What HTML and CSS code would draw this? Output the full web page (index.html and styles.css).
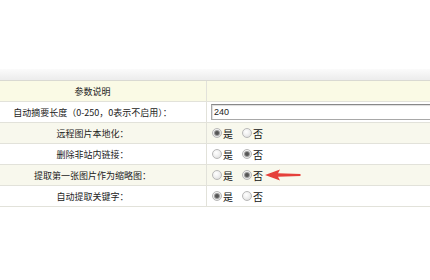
FILE: index.html
```html
<!DOCTYPE html>
<html lang="zh-CN">
<head>
<meta charset="utf-8">
<title>参数说明</title>
<link rel="stylesheet" href="styles.css">
</head>
<body>
<div class="spacer"></div>
<div class="toolbar"></div>
<div class="grid">
  <div class="cell label head">参数说明</div>
  <div class="cell value head"></div>

  <div class="cell label">自动摘要长度（0-250，0表示不启用）：</div>
  <div class="cell value"><input class="text" type="text" value="240"></div>

  <div class="cell label alt">远程图片本地化：</div>
  <div class="cell value alt">
    <span class="radio on"></span><span class="opt">是</span>
    <span class="radio"></span><span class="opt">否</span>
  </div>

  <div class="cell label">删除非站内链接：</div>
  <div class="cell value">
    <span class="radio"></span><span class="opt">是</span>
    <span class="radio on"></span><span class="opt">否</span>
  </div>

  <div class="cell label alt">提取第一张图片作为缩略图：</div>
  <div class="cell value alt">
    <span class="radio"></span><span class="opt">是</span>
    <span class="radio on"></span><span class="opt">否</span>
    <svg class="arrow" width="36" height="12" viewBox="0 0 36 12"><path d="M0 6 L15 0.4 L13 4.2 L35.5 5 L35.5 7 L13 7.8 L15 11.6 Z" fill="#e5403b"/></svg>
  </div>

  <div class="cell label">自动提取关键字：</div>
  <div class="cell value">
    <span class="radio on"></span><span class="opt">是</span>
    <span class="radio"></span><span class="opt">否</span>
  </div>
</div>
</body>
</html>
```

FILE: styles.css
```css
html, body {
  margin: 0;
  padding: 0;
  overflow: hidden;
  background: #fff;
}
body {
  width: 430px;
  height: 280px;
  font-family: "Noto Sans CJK SC", "Liberation Sans", sans-serif;
  font-size: 9px;
  color: #222;
}
.spacer {
  height: 69px;
}
.toolbar {
  height: 11px;
  background: linear-gradient(#fbfbfb, #ececec);
  border-bottom: 1px solid #d9d9d2;
}
.grid {
  display: grid;
  grid-template-columns: 207px 1fr;
}
.cell {
  height: 20px;
  border-bottom: 1px solid #e2e2da;
  display: flex;
  align-items: center;
  background: #fff;
}
.cell.head {
  background: #fafae5;
}
.cell.alt {
  background: #f8f8ed;
}
.label {
  justify-content: center;
  padding-right: 21px;
  border-right: 1px solid #e2e2da;
}
.value {
  padding-left: 5px;
  min-width: 0;
  overflow: hidden;
}
.text {
  flex: none;
  box-sizing: border-box;
  width: 240px;
  height: 16px;
  margin: 0 0 0 -1px;
  padding: 0 2px;
  border: 1px solid #a8a8a8;
  border-top-color: #888;
  box-shadow: inset 1px 1px 1px #ddd;
  font-family: "Liberation Sans", sans-serif;
  font-size: 9px;
  color: #222;
  outline: none;
}
.radio {
  box-sizing: border-box;
  width: 10px;
  height: 10px;
  border-radius: 50%;
  border: 1px solid #b8b8b8;
  background: radial-gradient(circle at 40% 35%, #ffffff 0%, #f0f0f0 45%, #d6d6d6 100%);
  display: inline-flex;
  align-items: center;
  justify-content: center;
  flex: none;
}
.radio.on::after {
  content: "";
  width: 4px;
  height: 4px;
  border-radius: 50%;
  background: #555;
  box-shadow: 0 0 0 1px #999;
}
.opt {
  margin-left: 1px;
  margin-right: 9px;
  font-size: 10px;
  color: #111;
}
.arrow {
  margin-left: -7px;
  flex: none;
}
```
